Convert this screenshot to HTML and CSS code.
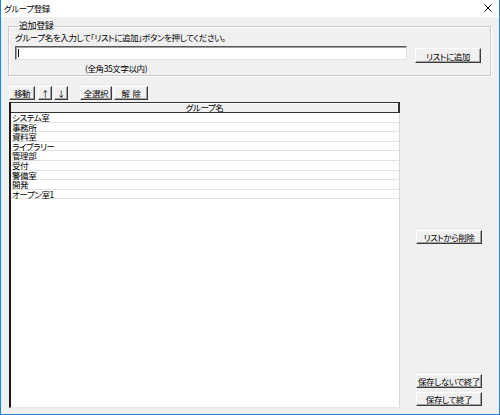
FILE: index.html
```html
<!DOCTYPE html>
<html lang="ja">
<head>
<meta charset="utf-8">
<title>グループ登録</title>
<link rel="stylesheet" href="styles.css">
</head>
<body>
<div class="window">
  <div class="titlebar">
    <span class="title">グループ登録</span>
    <svg class="close" width="8" height="8" viewBox="0 0 8 8"><path d="M0.5 0.5 L7.5 7.5 M7.5 0.5 L0.5 7.5" stroke="#000" stroke-width="1" fill="none"/></svg>
  </div>
  <div class="body">
    <fieldset class="group">
      <legend class="legend">追加登録</legend>
      <div class="hint">グループ名を入力して「リストに追加」ボタンを押してください。</div>
      <div class="entry">
        <div class="input"><span class="caret"></span></div>
        <button class="btn btn-add">リストに追加</button>
      </div>
      <div class="note">(全角35文字以内)</div>
    </fieldset>
    <div class="toolbar">
      <button class="btn btn-move">移動</button>
      <button class="btn btn-arrow">↑</button>
      <button class="btn btn-arrow">↓</button>
      <button class="btn btn-all">全選択</button>
      <button class="btn btn-clear">解  除</button>
    </div>
    <div class="main">
      <div class="list">
        <div class="list-head">グループ名</div>
        <div class="row">システム室</div>
        <div class="row">事務所</div>
        <div class="row">資料室</div>
        <div class="row">ライブラリー</div>
        <div class="row">管理部</div>
        <div class="row">受付</div>
        <div class="row">警備室</div>
        <div class="row">開発</div>
        <div class="row">オープン室1</div>
      </div>
      <div class="side">
        <button class="btn btn-side btn-delete">リストから削除</button>
        <div class="spacer"></div>
        <button class="btn btn-side">保存しないで終了</button>
        <button class="btn btn-side btn-save">保存して終了</button>
      </div>
    </div>
  </div>
</div>
</body>
</html>
```

FILE: styles.css
```css
html, body {
  margin: 0;
  padding: 0;
  background: #ffffff;
}
body {
  width: 500px;
  height: 415px;
  overflow: hidden;
  font-family: "Noto Sans CJK JP", "Noto Sans", sans-serif;
  font-feature-settings: "palt";
  font-size: 8.5px;
  letter-spacing: -0.4px;
  color: #000;
}
.window {
  width: 500px;
  height: 415px;
  box-sizing: border-box;
  border-left: 1px solid #1c86dc;
  border-right: 1px solid #1c86dc;
  border-bottom: 1px solid #1c86dc;
  background: #f0f0f0;
  display: flex;
  flex-direction: column;
}
.titlebar {
  height: 17px;
  flex: none;
  background: #ffffff;
  display: flex;
  align-items: center;
  justify-content: space-between;
  padding: 0 7px 0 3px;
}
.title {
  line-height: 10px;
  margin-top: -1px;
}
.close {
  display: block;
  margin-top: -1px;
}
.body {
  flex: 1;
  display: flex;
  flex-direction: column;
  padding: 4px 8px 6px 7px;
  min-height: 0;
}
.group {
  margin: 0;
  padding: 0 0 1px 6px;
  border: 1px solid #c9c9c9;
  box-shadow: inset 1px 1px 0 #ffffff, 1px 1px 0 #ffffff;
  min-width: 0;
}
.legend {
  padding: 0 1px;
  margin-left: 3px;
  font-size: 9px;
  line-height: 10px;
}
.hint {
  line-height: 12px;
  height: 12px;
  white-space: nowrap;
}
.entry {
  display: flex;
  align-items: flex-start;
  margin-top: 3px;
}
.input {
  width: 392px;
  height: 14px;
  box-sizing: border-box;
  background: #ffffff;
  border-style: solid;
  border-width: 1px;
  border-color: #5a5a5a #e3e3e3 #e3e3e3 #5a5a5a;
  box-shadow: inset 1px 1px 0 #a0a0a0;
  display: flex;
  align-items: center;
  padding-left: 2px;
}
.caret {
  width: 1px;
  height: 8px;
  background: #000;
}
.btn {
  font-family: inherit;
  font-feature-settings: "palt";
  font-size: 8.5px;
  letter-spacing: -0.4px;
  line-height: 10px;
  white-space: nowrap;
  color: #000;
  background: #f0f0f0;
  margin: 0;
  padding: 0;
  box-sizing: border-box;
  border-style: solid;
  border-width: 1px;
  border-color: #ffffff #3c3c3c #3c3c3c #ffffff;
  box-shadow: inset -1px -1px 0 #a0a0a0;
  border-radius: 0;
  display: flex;
  align-items: center;
  justify-content: center;
}
.btn-add {
  width: 66px;
  height: 15px;
  margin-left: 8px;
  margin-top: 2px;
}
.note {
  margin-left: 70px;
  line-height: 11px;
  height: 11px;
}
.toolbar {
  display: flex;
  margin-top: 10px;
  height: 14px;
  flex: none;
}
.toolbar .btn {
  height: 14px;
}
.btn-move {
  width: 26px;
  margin-left: 1px;
}
.btn-arrow {
  width: 14px;
  margin-left: 3px;
}
.btn-arrow + .btn-arrow {
  margin-left: 2px;
}
.btn-all {
  width: 32px;
  margin-left: 12px;
}
.btn-clear {
  width: 34px;
  margin-left: 2px;
  white-space: pre;
}
.main {
  flex: 1;
  display: flex;
  margin-top: 2px;
  min-height: 0;
}
.list {
  width: 391px;
  margin-left: 1px;
  box-sizing: border-box;
  background: #ffffff;
  border-style: solid;
  border-width: 0 1px 1px 2px;
  border-color: #d0d0d0 #d8d8d8 #e8e8e8 #1a1a1a;
  display: flex;
  flex-direction: column;
}
.list-head {
  height: 11px;
  flex: none;
  box-sizing: border-box;
  background: #f0f0f0;
  border: 1px solid #333;
  border-right-width: 2px;
  border-left: 0;
  margin-right: -1px;
  box-shadow: inset 0 1px 0 #fff;
  text-align: center;
  line-height: 9px;
}
.row {
  height: 9.6px;
  flex: none;
  box-sizing: border-box;
  border-bottom: 1px solid #e2e2e2;
  padding-left: 1px;
  line-height: 8.6px;
  white-space: nowrap;
}
.side {
  display: flex;
  flex-direction: column;
  margin-left: 16px;
  width: 66px;
  padding-top: 128px;
  padding-bottom: 2px;
}
.btn-side {
  width: 66px;
  height: 14px;
  flex: none;
}
.spacer {
  flex: 1;
}
.btn-save {
  margin-top: 4px;
}
```
